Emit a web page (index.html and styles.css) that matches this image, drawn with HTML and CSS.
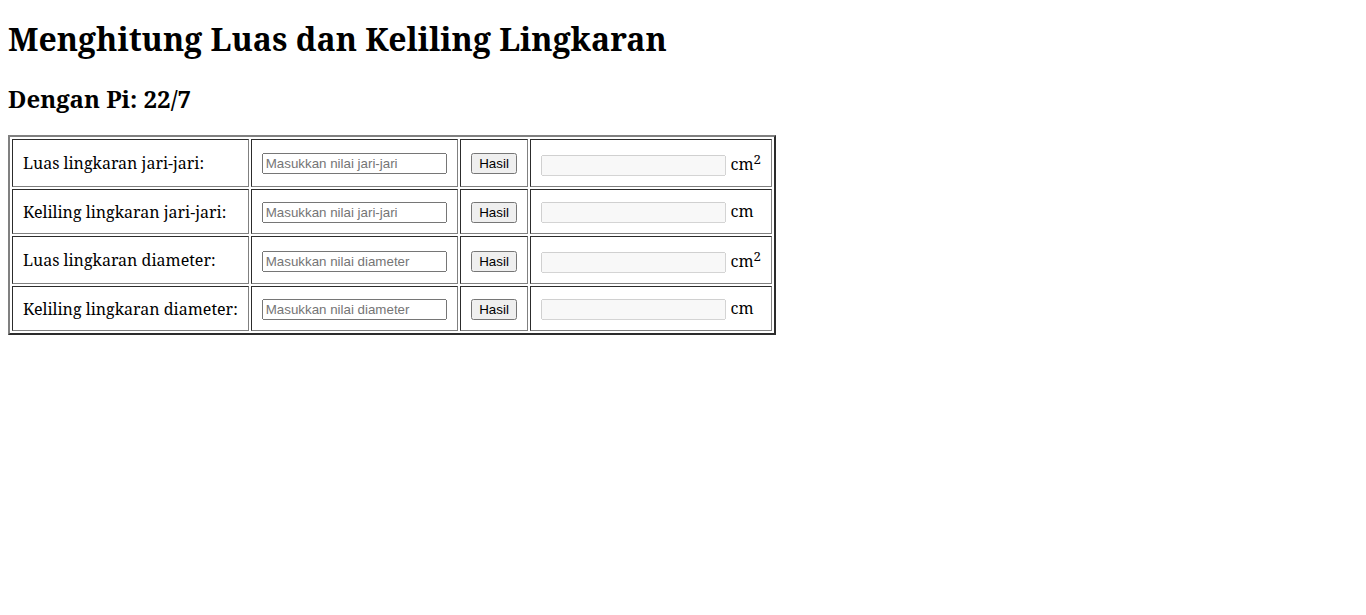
FILE: index.html
```html
<!DOCTYPE html>
<html>
<head>
<meta charset="utf-8">
<title>Lingkaran</title>
<link rel="stylesheet" href="styles.css">
</head>
<body>
<h1 class="title">Menghitung Luas dan Keliling Lingkaran</h1>
<h2>Dengan Pi: 22/7</h2>
<table class="calc" border="2" cellpadding="10">
<tr>
<td>Luas lingkaran jari-jari:</td>
<td><input type="text" placeholder="Masukkan nilai jari-jari"></td>
<td><button class="btn">Hasil</button></td>
<td><input type="text" disabled> cm<sup>2</sup></td>
</tr>
<tr>
<td>Keliling lingkaran jari-jari:</td>
<td><input type="text" placeholder="Masukkan nilai jari-jari"></td>
<td><button class="btn">Hasil</button></td>
<td><input type="text" disabled> cm</td>
</tr>
<tr>
<td>Luas lingkaran diameter:</td>
<td><input type="text" placeholder="Masukkan nilai diameter"></td>
<td><button class="btn">Hasil</button></td>
<td><input type="text" disabled> cm<sup>2</sup></td>
</tr>
<tr>
<td>Keliling lingkaran diameter:</td>
<td><input type="text" placeholder="Masukkan nilai diameter"></td>
<td><button class="btn">Hasil</button></td>
<td><input type="text" disabled> cm</td>
</tr>
</table>
</body>
</html>
```
FILE: styles.css
```css
body {
  font-family: "Noto Serif", "DejaVu Serif", serif;
}
.title {
  margin-top: 9.44px;
}
.btn {
  padding: 1px 6.5px;
}
```
